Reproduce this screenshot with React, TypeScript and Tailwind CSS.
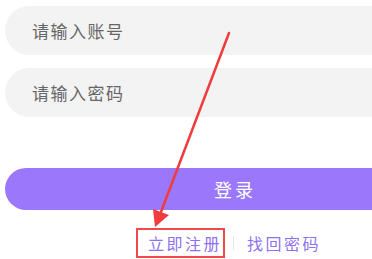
import React from "react";

const font = { fontFamily: '"Noto Sans CJK SC", "Noto Sans", sans-serif' };

export default function App() {
  return (
    <div
      className="relative w-[372px] h-[259px] overflow-hidden bg-white"
      style={font}
    >
      <div className="ml-[5px] w-[457px] pt-[6px] flex flex-col">
        <div className="h-[49px] rounded-full bg-[#f3f3f3] pl-[27px] flex items-center text-[17px] tracking-[1.5px] text-[#666666]">
          请输入账号
        </div>
        <div className="mt-[13px] h-[49px] rounded-full bg-[#f3f3f3] pl-[27px] flex items-center text-[17px] tracking-[1.5px] text-[#666666]">
          请输入密码
        </div>
        <button className="mt-[51px] h-[42px] rounded-full bg-[#9b78fb] text-white text-[18px] tracking-[3px] pl-[3px] flex items-center justify-center">
          登录
        </button>
        <div className="mt-[18px] flex items-center h-[30px] text-[16px] tracking-[2.5px] text-[#9070f2]">
          <span className="ml-[131px] h-[30px] border-2 border-[#f24848] pl-[10px] pr-[1px] flex items-center">
            立即注册
          </span>
          <span className="ml-[8px] w-px h-[14px] bg-[#e6e6e6]" />
          <span className="ml-[13px] flex items-center">找回密码</span>
        </div>
      </div>
      <svg
        className="absolute left-0 top-0 pointer-events-none"
        width="372"
        height="259"
        viewBox="0 0 372 259"
      >
        <line
          x1="229"
          y1="33"
          x2="161"
          y2="212"
          stroke="#f03c3c"
          strokeWidth="2.5"
          strokeLinecap="round"
        />
        <polygon points="155,227 153,209 169,215" fill="#f03c3c" />
      </svg>
    </div>
  );
}
